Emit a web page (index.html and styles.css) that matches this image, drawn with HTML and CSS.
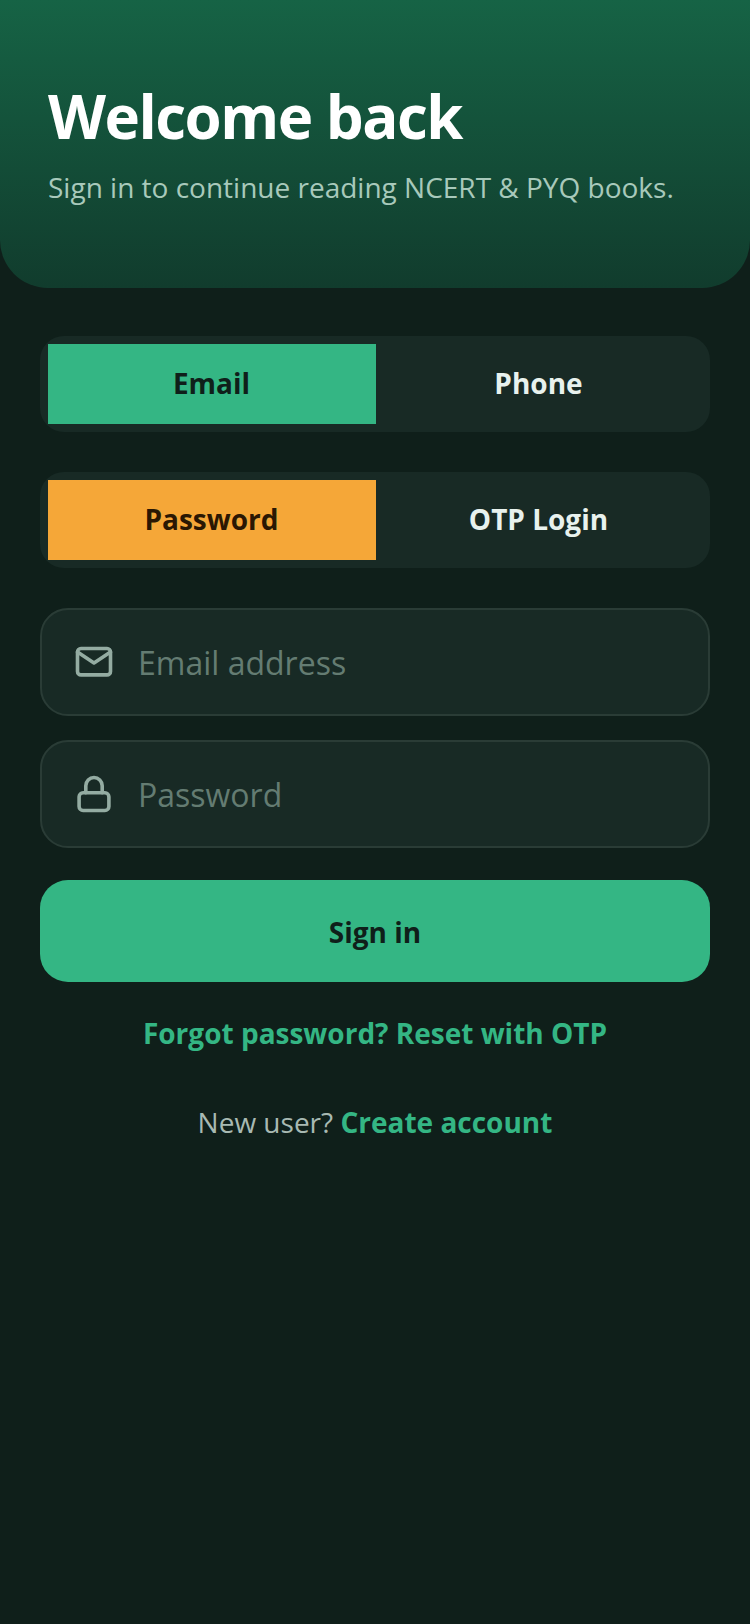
FILE: index.html
```html
<!DOCTYPE html>
<html lang="en">
<head>
<meta charset="utf-8">
<title>Welcome back</title>
<link rel="stylesheet" href="styles.css">
</head>
<body>
<header class="hero">
  <h1 class="hero-title">Welcome back</h1>
  <p class="hero-sub">Sign in to continue reading NCERT &amp; PYQ books.</p>
</header>
<main class="content">
  <div class="toggle">
    <div class="tab tab-green">Email</div>
    <div class="tab">Phone</div>
  </div>
  <div class="toggle">
    <div class="tab tab-orange">Password</div>
    <div class="tab">OTP Login</div>
  </div>
  <div class="field field-first">
    <svg class="icon" viewBox="0 0 44 44" fill="none" stroke="currentColor" stroke-width="3.6" stroke-linecap="round" stroke-linejoin="round"><rect x="5.5" y="8.5" width="33" height="26.4" rx="3.5"/><path d="M5.5 12L22 23 38.5 12"/></svg>
    <span class="placeholder">Email address</span>
  </div>
  <div class="field field-second">
    <svg class="icon" viewBox="0 0 44 44" fill="none" stroke="currentColor" stroke-width="3.6" stroke-linecap="round" stroke-linejoin="round"><rect x="7.1" y="20.8" width="29.8" height="17.7" rx="4"/><path d="M13.8 20.8V13.7a8.2 8.2 0 0 1 16.4 0V20.8"/></svg>
    <span class="placeholder">Password</span>
  </div>
  <div class="submit">Sign in</div>
  <div class="forgot">Forgot password? Reset with OTP</div>
  <div class="signup">New user? <span class="signup-link">Create account</span></div>
</main>
</body>
</html>
```
FILE: styles.css
```css
* { box-sizing: border-box; }
html, body { margin: 0; height: 100%; }
body {
  background: #0f1f1a;
  font-family: "Open Sans", sans-serif;
  color: #e8f2ee;
}
.hero {
  height: 288px;
  padding: 80px 48px 0;
  background: linear-gradient(180deg, #166345, #113c2d);
  border-radius: 0 0 48px 48px;
}
.hero-title {
  margin: 0;
  font-size: 60px;
  line-height: 72px;
  font-weight: 700;
  letter-spacing: -1.5px;
  color: #fff;
}
.hero-sub {
  margin: 16px 0 0;
  font-size: 28px;
  line-height: 38px;
  color: #a8c9bb;
}
.content {
  padding: 48px 40px 0;
  display: flex;
  flex-direction: column;
}
.toggle {
  display: flex;
  height: 96px;
  padding: 8px;
  margin-bottom: 40px;
  border-radius: 24px;
  background: #182a25;
}
.tab {
  flex: 1;
  display: flex;
  align-items: center;
  justify-content: center;
  padding: 0 1px 2px 0;
  font-size: 28px;
  font-weight: 700;
}
.tab-green { flex: 0 0 328px; background: #34b684; color: #0f1f1a; }
.tab-orange { flex: 0 0 328px; background: #f5a738; color: #2a1703; }
.field {
  display: flex;
  align-items: center;
  gap: 22px;
  height: 108px;
  padding: 0 30px;
  border: 2px solid #2a3c36;
  border-radius: 28px;
  background: #182a25;
}
.field-second { margin-top: 24px; }
.icon { width: 44px; height: 44px; color: #94aca2; }
.placeholder { font-size: 32px; color: #647c72; }
.submit {
  margin-top: 32px;
  height: 102px;
  padding-top: 1px;
  display: flex;
  align-items: center;
  justify-content: center;
  border-radius: 28px;
  background: #34b684;
  color: #0f1f1a;
  font-size: 28px;
  font-weight: 700;
}
.forgot {
  margin-top: 31px;
  text-align: center;
  font-size: 28px;
  line-height: 40px;
  font-weight: 700;
  color: #34b684;
}
.signup {
  margin-top: 49px;
  text-align: center;
  font-size: 28px;
  line-height: 40px;
  color: #a8b9b2;
}
.signup-link { font-weight: 700; color: #34b684; }
```
